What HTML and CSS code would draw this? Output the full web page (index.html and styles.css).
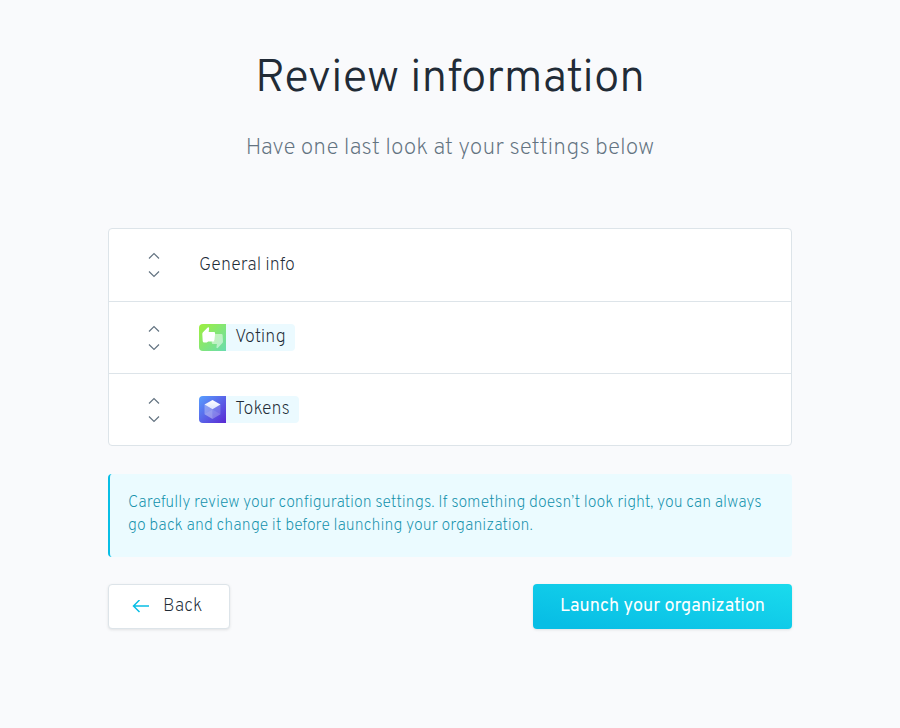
FILE: index.html
```html
<!DOCTYPE html>
<html lang="en">
<head>
<meta charset="utf-8">
<meta name="viewport" content="width=device-width, initial-scale=1">
<title>Review information</title>
<link rel="stylesheet" href="styles.css">
</head>
<body>
<main class="page">
  <header class="intro">
    <h1 class="title">Review information</h1>
    <p class="subtitle">Have one last look at your settings below</p>
  </header>

  <ul class="sections">
    <li class="section">
      <button class="row" type="button" aria-expanded="false">
        <svg class="toggle" viewBox="0 0 12 28" aria-hidden="true"><path d="M1 7.500 6 2.500l5 5M1 20.500l5 5 5-5"/></svg>
        <span>General info</span>
      </button>
    </li>
    <li class="section">
      <button class="row" type="button" aria-expanded="false">
        <svg class="toggle" viewBox="0 0 12 28" aria-hidden="true"><path d="M1 7.500 6 2.500l5 5M1 20.500l5 5 5-5"/></svg>
        <span class="app">
          <svg class="app-icon" viewBox="0 0 27 27" aria-hidden="true">
            <defs><linearGradient id="voting" x1="0" y1="0" x2="1" y2="1"><stop offset="0" stop-color="#9ef03c"/><stop offset="1" stop-color="#69dcb0"/></linearGradient></defs>
            <path fill="url(#voting)" d="M0 0h27v27H0z"/>
            <path fill="#fff" fill-opacity=".5" d="M16 10h6.500q1 0 1.100 1l.4 6.500q0 1-.8 1.700L18.700 24q-.9.400-1.300-.4l.5-3.600h-3.900q-1.200-.1-1.300-1.300l.2-1.700H16z"/>
            <path fill="#fff" d="M9.300 3.300q1 .1.800 1.200L9.700 8H15q1.100.1 1.100 1.200l-.4 7q-.1 1.300-1.300 1.300H9.200l-1.400.9H4.900q-1.200 0-1.200-1.300L3.300 10q0-1 .7-1.700l4.400-4.600q.4-.4.900-.4z"/>
          </svg>
          <span class="app-name">Voting</span>
        </span>
      </button>
    </li>
    <li class="section">
      <button class="row" type="button" aria-expanded="false">
        <svg class="toggle" viewBox="0 0 12 28" aria-hidden="true"><path d="M1 7.500 6 2.500l5 5M1 20.500l5 5 5-5"/></svg>
        <span class="app">
          <svg class="app-icon" viewBox="0 0 27 27" aria-hidden="true">
            <defs>
              <linearGradient id="tokens" x1="0" y1="0" x2="1" y2="1"><stop offset="0" stop-color="#58a0ff"/><stop offset="1" stop-color="#5a28d2"/></linearGradient>
              <linearGradient id="top" x1="0" y1="0" x2="0" y2="1"><stop offset="0" stop-color="#fff"/><stop offset="1" stop-color="#dce4ff"/></linearGradient>
            </defs>
            <path fill="url(#tokens)" d="M0 0h27v27H0z"/>
            <path fill="url(#top)" d="m13.500 4 8 4.600-8 4.700-8-4.700z"/>
            <path fill="#fff" fill-opacity=".3" d="m5.500 8.600 8 4.700V23l-8-4.700z"/>
            <path fill="#fff" fill-opacity=".18" d="m21.500 8.600-8 4.700V23l8-4.700z"/>
            <path fill="#fff" fill-opacity=".1" d="m5.500 18.300 8-4.900 8 4.900-8 4.700z"/>
          </svg>
          <span class="app-name">Tokens</span>
        </span>
      </button>
    </li>
  </ul>

  <p class="notice">Carefully review your configuration settings. If something doesn’t look right, you can always go back and change it before launching your organization.</p>

  <nav class="actions" aria-label="Setup steps">
    <button class="button button-back" type="button">
      <svg class="arrow" viewBox="0 0 18 14" aria-hidden="true"><path d="M17 6H2M7.500 0 1.500 6l6 6"/></svg>
      <span>Back</span>
    </button>
    <button class="button button-launch" type="button">Launch your organization</button>
  </nav>
</main>
</body>
</html>
```
FILE: styles.css
```css
* {
  box-sizing: border-box;
}

body {
  margin: 0;
  background: #f9fafc;
  color: #212b36;
  font-family: Overpass, Roboto, "Liberation Sans", sans-serif;
  font-weight: 200;
}

.page {
  padding: 48px 12%;
}

.intro {
  text-align: center;
}

.title {
  margin: 0;
  font-size: 46px;
  line-height: 64px;
  font-weight: 300;
}

.subtitle {
  margin: 19px 0 0;
  color: #637381;
  font-size: 23px;
  line-height: 36px;
}

.sections {
  margin: 61px 0 0;
  padding: 0;
  overflow: hidden;
  list-style: none;
  background: #fff;
  border: 1px solid #dde4e9;
  border-radius: 4px;
}

.section + .section {
  border-top: 1px solid #dde4e9;
}

.row {
  display: flex;
  align-items: center;
  gap: 39px;
  width: 100%;
  height: 72px;
  padding: 0 39px;
  background: none;
  border: 0;
  color: inherit;
  font: inherit;
  font-size: 18px;
  line-height: 27px;
  text-align: left;
  cursor: pointer;
}

.section + .section .row {
  height: 71px;
}

.toggle {
  width: 12px;
  height: 28px;
  fill: none;
  stroke: #637381;
  stroke-width: 1.2;
}

.app {
  display: flex;
  overflow: hidden;
  background: #ebfaff;
  border-radius: 4px;
}

.app-icon {
  width: 27px;
  height: 27px;
}

.app-name {
  padding: 0 9px;
}

.notice {
  margin: 28px 0 0;
  padding: 18px 18px 19px;
  background: #ebfbff;
  border-left: 2px solid #08bee5;
  border-radius: 4px;
  color: #1090ab;
  font-size: 16px;
  line-height: 23px;
}

.actions {
  display: flex;
  justify-content: space-between;
  margin-top: 27px;
}

.button {
  display: flex;
  align-items: center;
  height: 45px;
  border: 0;
  border-radius: 4px;
  font: inherit;
  font-size: 18px;
  cursor: pointer;
}

.button-back {
  gap: 13px;
  padding: 0 27px 0 23px;
  background: #fff;
  border: 1px solid #dde4e9;
  box-shadow: 0 1px 3px rgba(0, 0, 0, 0.1);
  color: #212b36;
}

.button-launch {
  padding: 0 27px;
  background: linear-gradient(190deg, #1cdeee -10%, #08bee5 90%);
  box-shadow: 0 1px 3px rgba(0, 0, 0, 0.1);
  color: #fff;
  font-weight: 400;
}

.arrow {
  width: 18px;
  height: 14px;
  fill: none;
  stroke: #08bee5;
  stroke-width: 1.5;
}
```
